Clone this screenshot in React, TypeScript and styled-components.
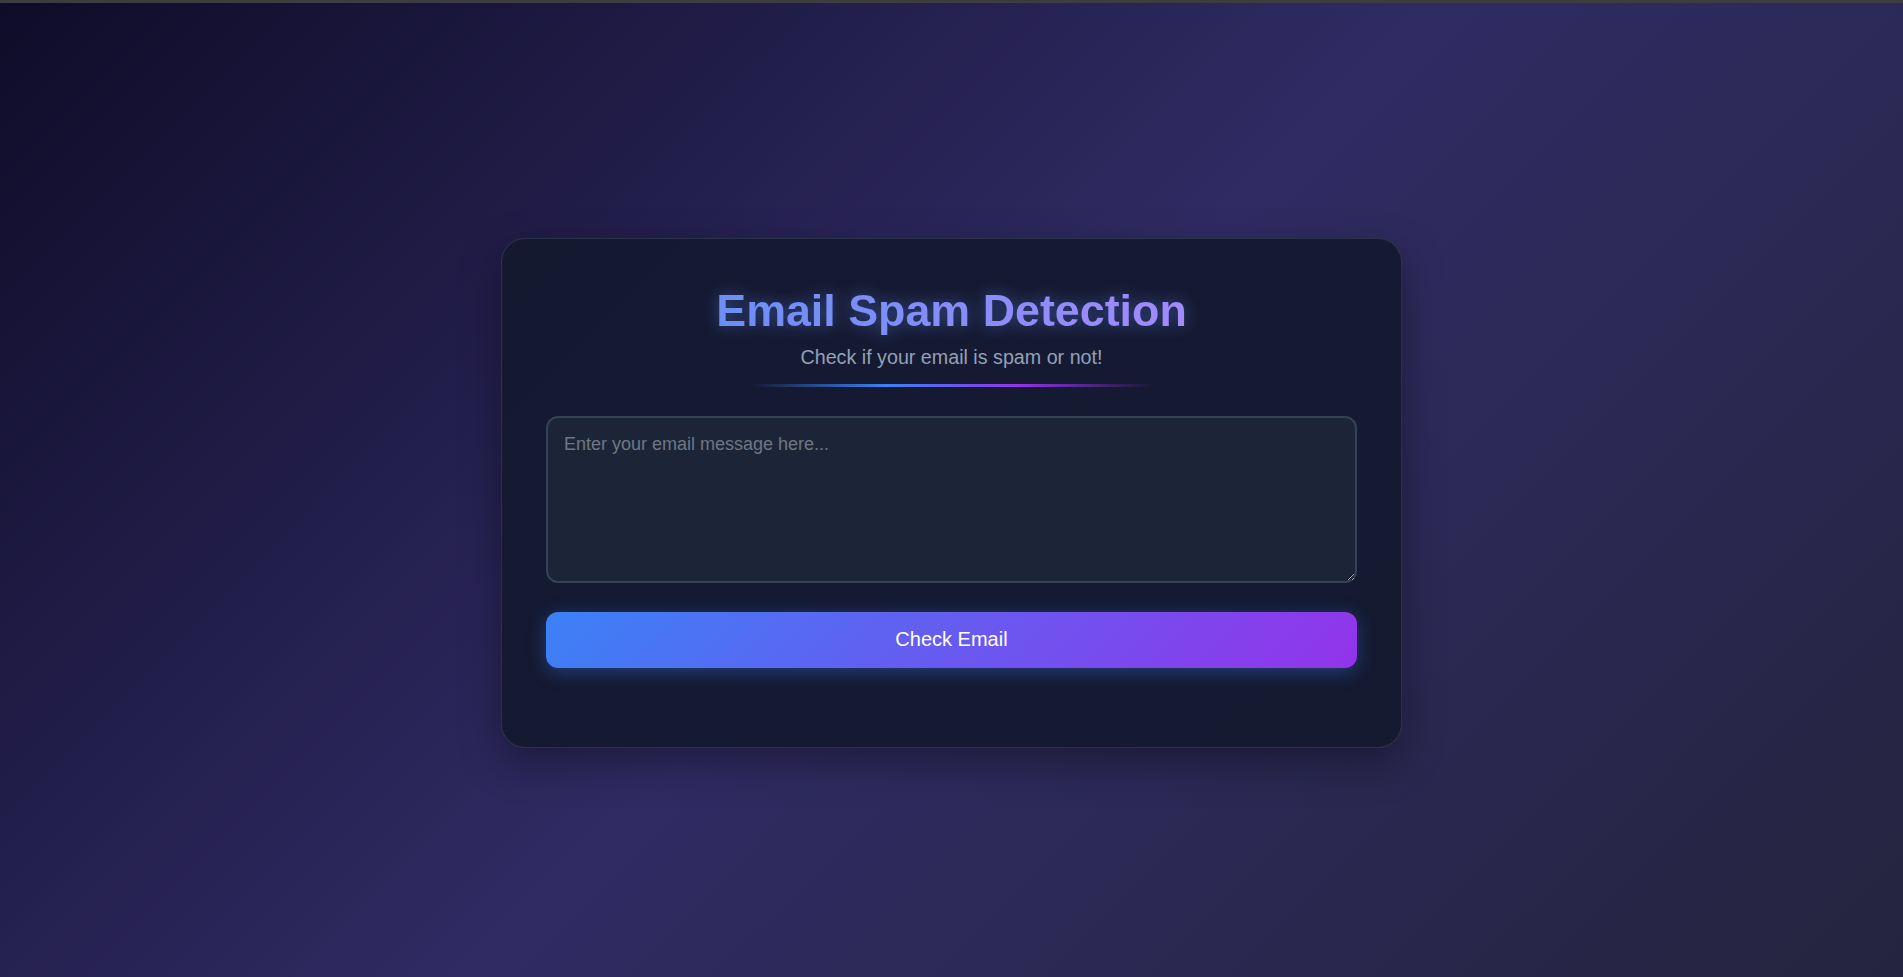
import React from "react";
import styled, { createGlobalStyle } from "styled-components";

const GlobalStyle = createGlobalStyle`
  * { box-sizing: border-box; }
  html, body { margin: 0; padding: 0; }
  body {
    font-family: "Liberation Sans", Arial, sans-serif;
    background: #24243e;
  }
`;

const TopBar = styled.div`
  height: 3px;
  background: #3d3d3f;
`;

const Page = styled.main`
  min-height: 974px;
  background: linear-gradient(135deg, #0f0c29 0%, #302b63 50%, #24243e 100%);
  display: flex;
  justify-content: center;
  align-items: flex-start;
  padding-top: 235px;
`;

const Card = styled.section`
  width: 901px;
  padding: 46px 44px 79px;
  background: rgba(20, 25, 47, 0.92);
  border: 1px solid rgba(148, 163, 184, 0.18);
  border-radius: 24px;
  box-shadow: 0 15px 40px rgba(0, 0, 0, 0.35);
  display: flex;
  flex-direction: column;
  align-items: center;
`;

const Title = styled.h1`
  margin: 0;
  font-size: 44.8px;
  font-weight: 700;
  line-height: 1.15;
  background: linear-gradient(90deg, #6a8ff6, #a38afb);
  -webkit-background-clip: text;
  background-clip: text;
  color: transparent;
  filter: drop-shadow(0 0 8px rgba(96, 140, 250, 0.45));
`;

const Subtitle = styled.p`
  margin: 9px 0 0;
  font-size: 19.7px;
  color: #94a0b8;
`;

const Divider = styled.div`
  width: 400px;
  height: 3px;
  margin: 15px 0 29px;
  background: linear-gradient(90deg, transparent, #3b82f6, #9333ea, transparent);
`;

const TextArea = styled.textarea`
  display: block;
  width: 100%;
  height: 167px;
  padding: 16px;
  background: #1b2537;
  border: 2px solid #344256;
  border-radius: 12px;
  color: #e2e8f0;
  font-family: "Liberation Sans", Arial, sans-serif;
  font-size: 18px;
  resize: vertical;
  outline: none;
  &::placeholder {
    color: #6f7784;
  }
`;

const Button = styled.button`
  width: 100%;
  height: 56px;
  margin-top: 29px;
  border: none;
  border-radius: 12px;
  background: linear-gradient(135deg, #3b82f6, #9333ea);
  color: #ffffff;
  font-family: "Liberation Sans", Arial, sans-serif;
  font-size: 20px;
  cursor: pointer;
  box-shadow: 0 4px 18px rgba(59, 130, 246, 0.35);
`;

export default function App() {
  return (
    <>
      <GlobalStyle />
      <TopBar />
      <Page>
        <Card>
          <Title>Email Spam Detection</Title>
          <Subtitle>Check if your email is spam or not!</Subtitle>
          <Divider />
          <TextArea placeholder="Enter your email message here..." />
          <Button>Check Email</Button>
        </Card>
      </Page>
    </>
  );
}
